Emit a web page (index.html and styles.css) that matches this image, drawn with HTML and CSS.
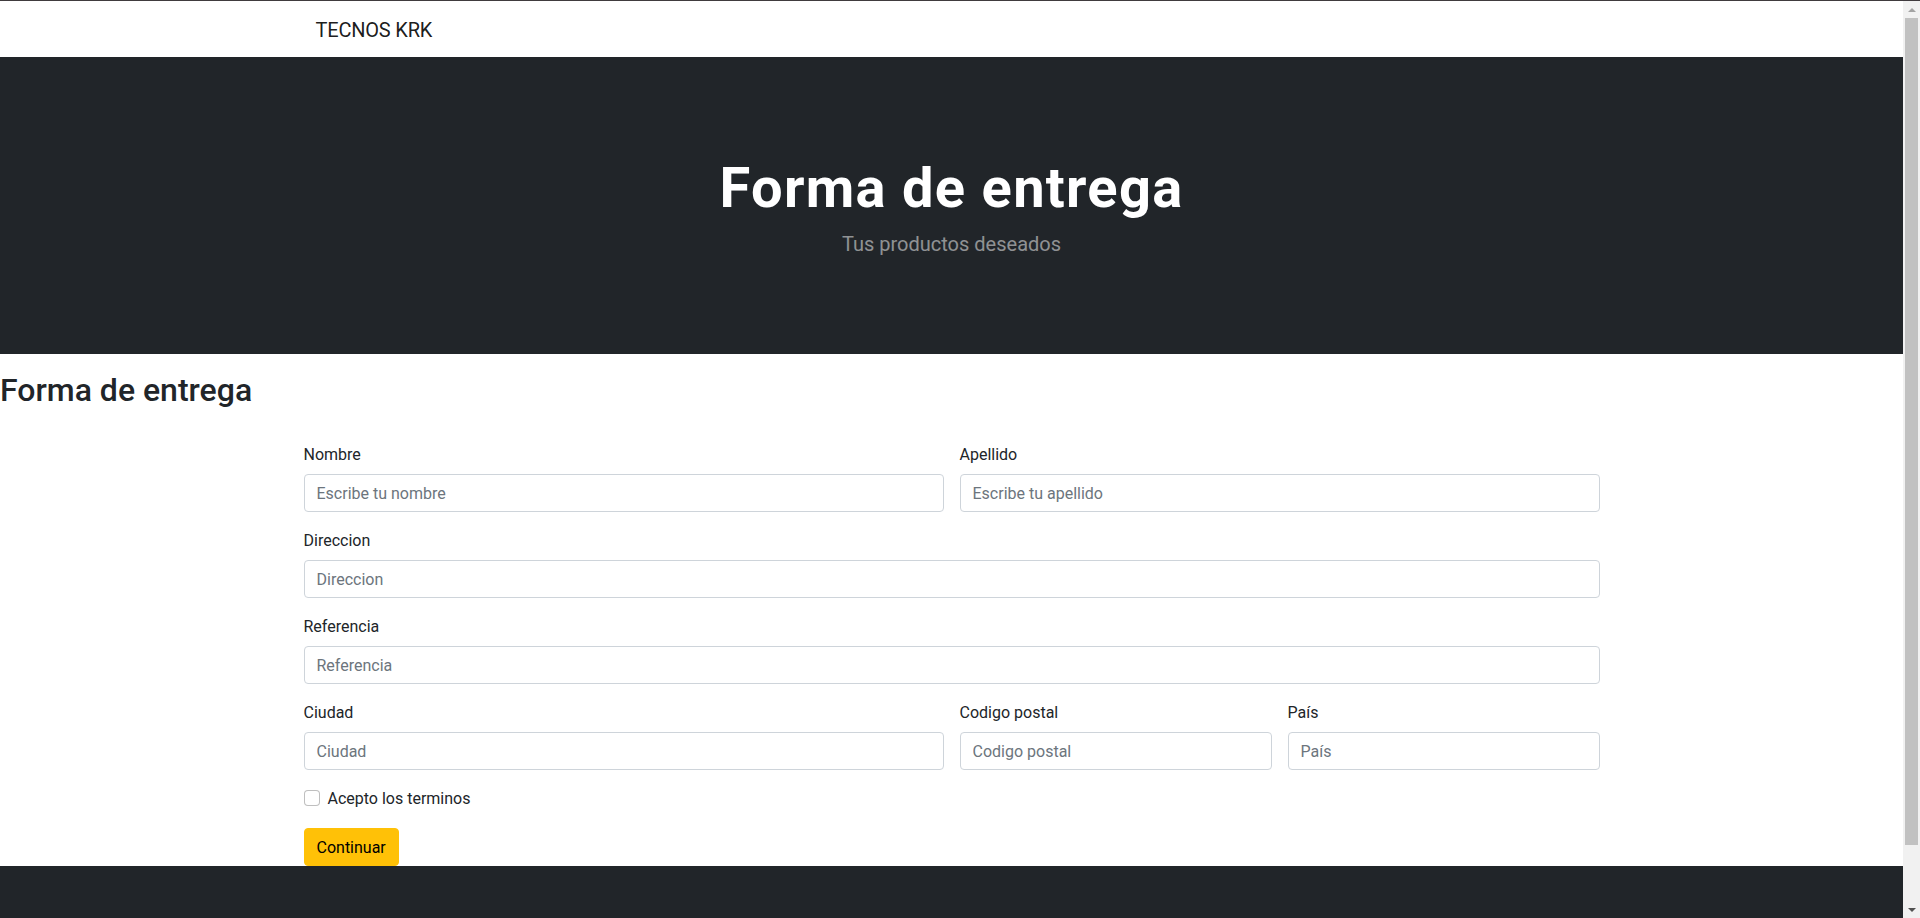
FILE: index.html
```html
<!DOCTYPE html>
<html lang="es">
<head>
<meta charset="utf-8">
<title>Forma de entrega - TECNOS KRK</title>
<link rel="stylesheet" href="styles.css">
</head>
<body>
<div class="window-line"></div>
<div class="page">
  <nav class="navbar">
    <div class="container nav-container">
      <a class="brand" href="#">TECNOS KRK</a>
    </div>
  </nav>
  <header class="hero">
    <div class="container hero-inner">
      <h1 class="hero-title">Forma de entrega</h1>
      <p class="hero-lead">Tus productos deseados</p>
    </div>
  </header>
  <h2 class="section-title">Forma de entrega</h2>
  <div class="container form-container">
    <form class="form-grid">
      <div class="col-6">
        <label class="form-label" for="nombre">Nombre</label>
        <input class="form-control" id="nombre" type="text" placeholder="Escribe tu nombre">
      </div>
      <div class="col-6">
        <label class="form-label" for="apellido">Apellido</label>
        <input class="form-control" id="apellido" type="text" placeholder="Escribe tu apellido">
      </div>
      <div class="col-12">
        <label class="form-label" for="direccion">Direccion</label>
        <input class="form-control" id="direccion" type="text" placeholder="Direccion">
      </div>
      <div class="col-12">
        <label class="form-label" for="referencia">Referencia</label>
        <input class="form-control" id="referencia" type="text" placeholder="Referencia">
      </div>
      <div class="col-6">
        <label class="form-label" for="ciudad">Ciudad</label>
        <input class="form-control" id="ciudad" type="text" placeholder="Ciudad">
      </div>
      <div class="col-3">
        <label class="form-label" for="postal">Codigo postal</label>
        <input class="form-control" id="postal" type="text" placeholder="Codigo postal">
      </div>
      <div class="col-3">
        <label class="form-label" for="pais">País</label>
        <input class="form-control" id="pais" type="text" placeholder="País">
      </div>
      <div class="col-12">
        <div class="form-check">
          <input class="form-check-input" id="terminos" type="checkbox">
          <label class="form-check-label" for="terminos">Acepto los terminos</label>
        </div>
      </div>
      <div class="col-12">
        <button class="btn-warning" type="submit">Continuar</button>
      </div>
    </form>
  </div>
  <footer class="footer"></footer>
</div>
<div class="scrollbar" aria-hidden="true">
  <div class="sb-btn"><span class="arrow-up"></span></div>
  <div class="sb-track"><div class="sb-thumb"></div></div>
  <div class="sb-btn"><span class="arrow-down"></span></div>
</div>
</body>
</html>
```

FILE: styles.css
```css
* {
  box-sizing: border-box;
}

html, body {
  margin: 0;
  padding: 0;
}

html {
  scrollbar-width: none;
}

::-webkit-scrollbar {
  display: none;
}

body {
  font-family: Roboto, "Liberation Sans", sans-serif;
  font-size: 16px;
  line-height: 1.5;
  color: #212529;
  background: #fff;
}

.window-line {
  height: 1px;
  background: #403b3e;
}

.page {
  margin-right: 17px;
}

.container {
  width: 100%;
  max-width: 1320px;
  margin: 0 auto;
  padding: 0 12px;
}

.navbar {
  background: #fff;
  padding: 8px 0;
}

.nav-container {
  padding: 0 24px;
  display: flex;
  align-items: center;
}

.brand {
  font-size: 20px;
  line-height: 30px;
  padding: 6px 0 4px;
  letter-spacing: -0.2px;
  color: rgba(0, 0, 0, 0.9);
  text-decoration: none;
}

.hero {
  background: #212529;
  padding: 48px 0;
}

.hero-inner {
  margin-top: 48px;
  margin-bottom: 48px;
  text-align: center;
}

.hero-title {
  margin: 0 0 8px;
  padding-top: 4px;
  font-size: 56px;
  line-height: 63.2px;
  font-weight: 700;
  letter-spacing: 1.3px;
  color: #fff;
}

.hero-lead {
  margin: 0;
  padding-top: 2px;
  font-size: 20px;
  line-height: 28px;
  color: rgba(255, 255, 255, 0.5);
}

.section-title {
  margin: 16px 0 8px;
  padding-top: 2px;
  font-size: 32px;
  line-height: 36.4px;
  font-weight: 500;
  color: #212529;
}

.form-container {
  margin-top: 33px;
}

.form-grid {
  display: grid;
  grid-template-columns: repeat(12, 1fr);
  gap: 16px;
  margin: 0;
}

.col-12 { grid-column: span 12; }
.col-6 { grid-column: span 6; }
.col-3 { grid-column: span 3; }

.form-label {
  display: block;
  margin-bottom: 8px;
  padding-top: 1px;
  line-height: 23px;
}

.form-control {
  display: block;
  width: 100%;
  height: 38px;
  padding: 7px 12px 5px;
  font-family: inherit;
  font-size: 16px;
  line-height: 24px;
  color: #212529;
  background: #fff;
  border: 1px solid #ced4da;
  border-radius: 4px;
  outline: none;
}

.form-control::placeholder {
  color: #6c757d;
  opacity: 1;
}

.form-check {
  display: flex;
  align-items: flex-start;
  min-height: 24px;
  margin-bottom: 2px;
}

.form-check-input {
  appearance: none;
  -webkit-appearance: none;
  width: 16px;
  height: 16px;
  margin: 4px 8px 0 0;
  background: #fff;
  border: 1px solid rgba(0, 0, 0, 0.25);
  border-radius: 4px;
  flex-shrink: 0;
}

.form-check-label {
  padding-top: 1px;
  line-height: 23px;
}

.btn-warning {
  display: inline-block;
  height: 38px;
  padding: 7px 12px 5px;
  font-family: inherit;
  font-size: 16px;
  line-height: 24px;
  color: #000;
  background: #ffc107;
  border: 1px solid #ffc107;
  border-radius: 4px;
  cursor: pointer;
}

.footer {
  background: #212529;
  height: 120px;
}

/* browser scrollbar (window chrome) drawn over the viewport edge */
.scrollbar {
  position: fixed;
  top: 1px;
  right: 0;
  bottom: 0;
  width: 17px;
  background: #f1f1f1;
  display: flex;
  flex-direction: column;
}

.sb-btn {
  height: 17px;
  flex-shrink: 0;
  display: flex;
  align-items: center;
  justify-content: center;
}

.arrow-up {
  width: 0;
  height: 0;
  border-left: 4px solid transparent;
  border-right: 4px solid transparent;
  border-bottom: 4px solid #a3a3a3;
}

.arrow-down {
  width: 0;
  height: 0;
  border-left: 4px solid transparent;
  border-right: 4px solid transparent;
  border-top: 4px solid #505050;
}

.sb-track {
  flex: 1;
  padding: 0 2px;
}

.sb-thumb {
  height: 827px;
  background: #c1c1c1;
}
```
